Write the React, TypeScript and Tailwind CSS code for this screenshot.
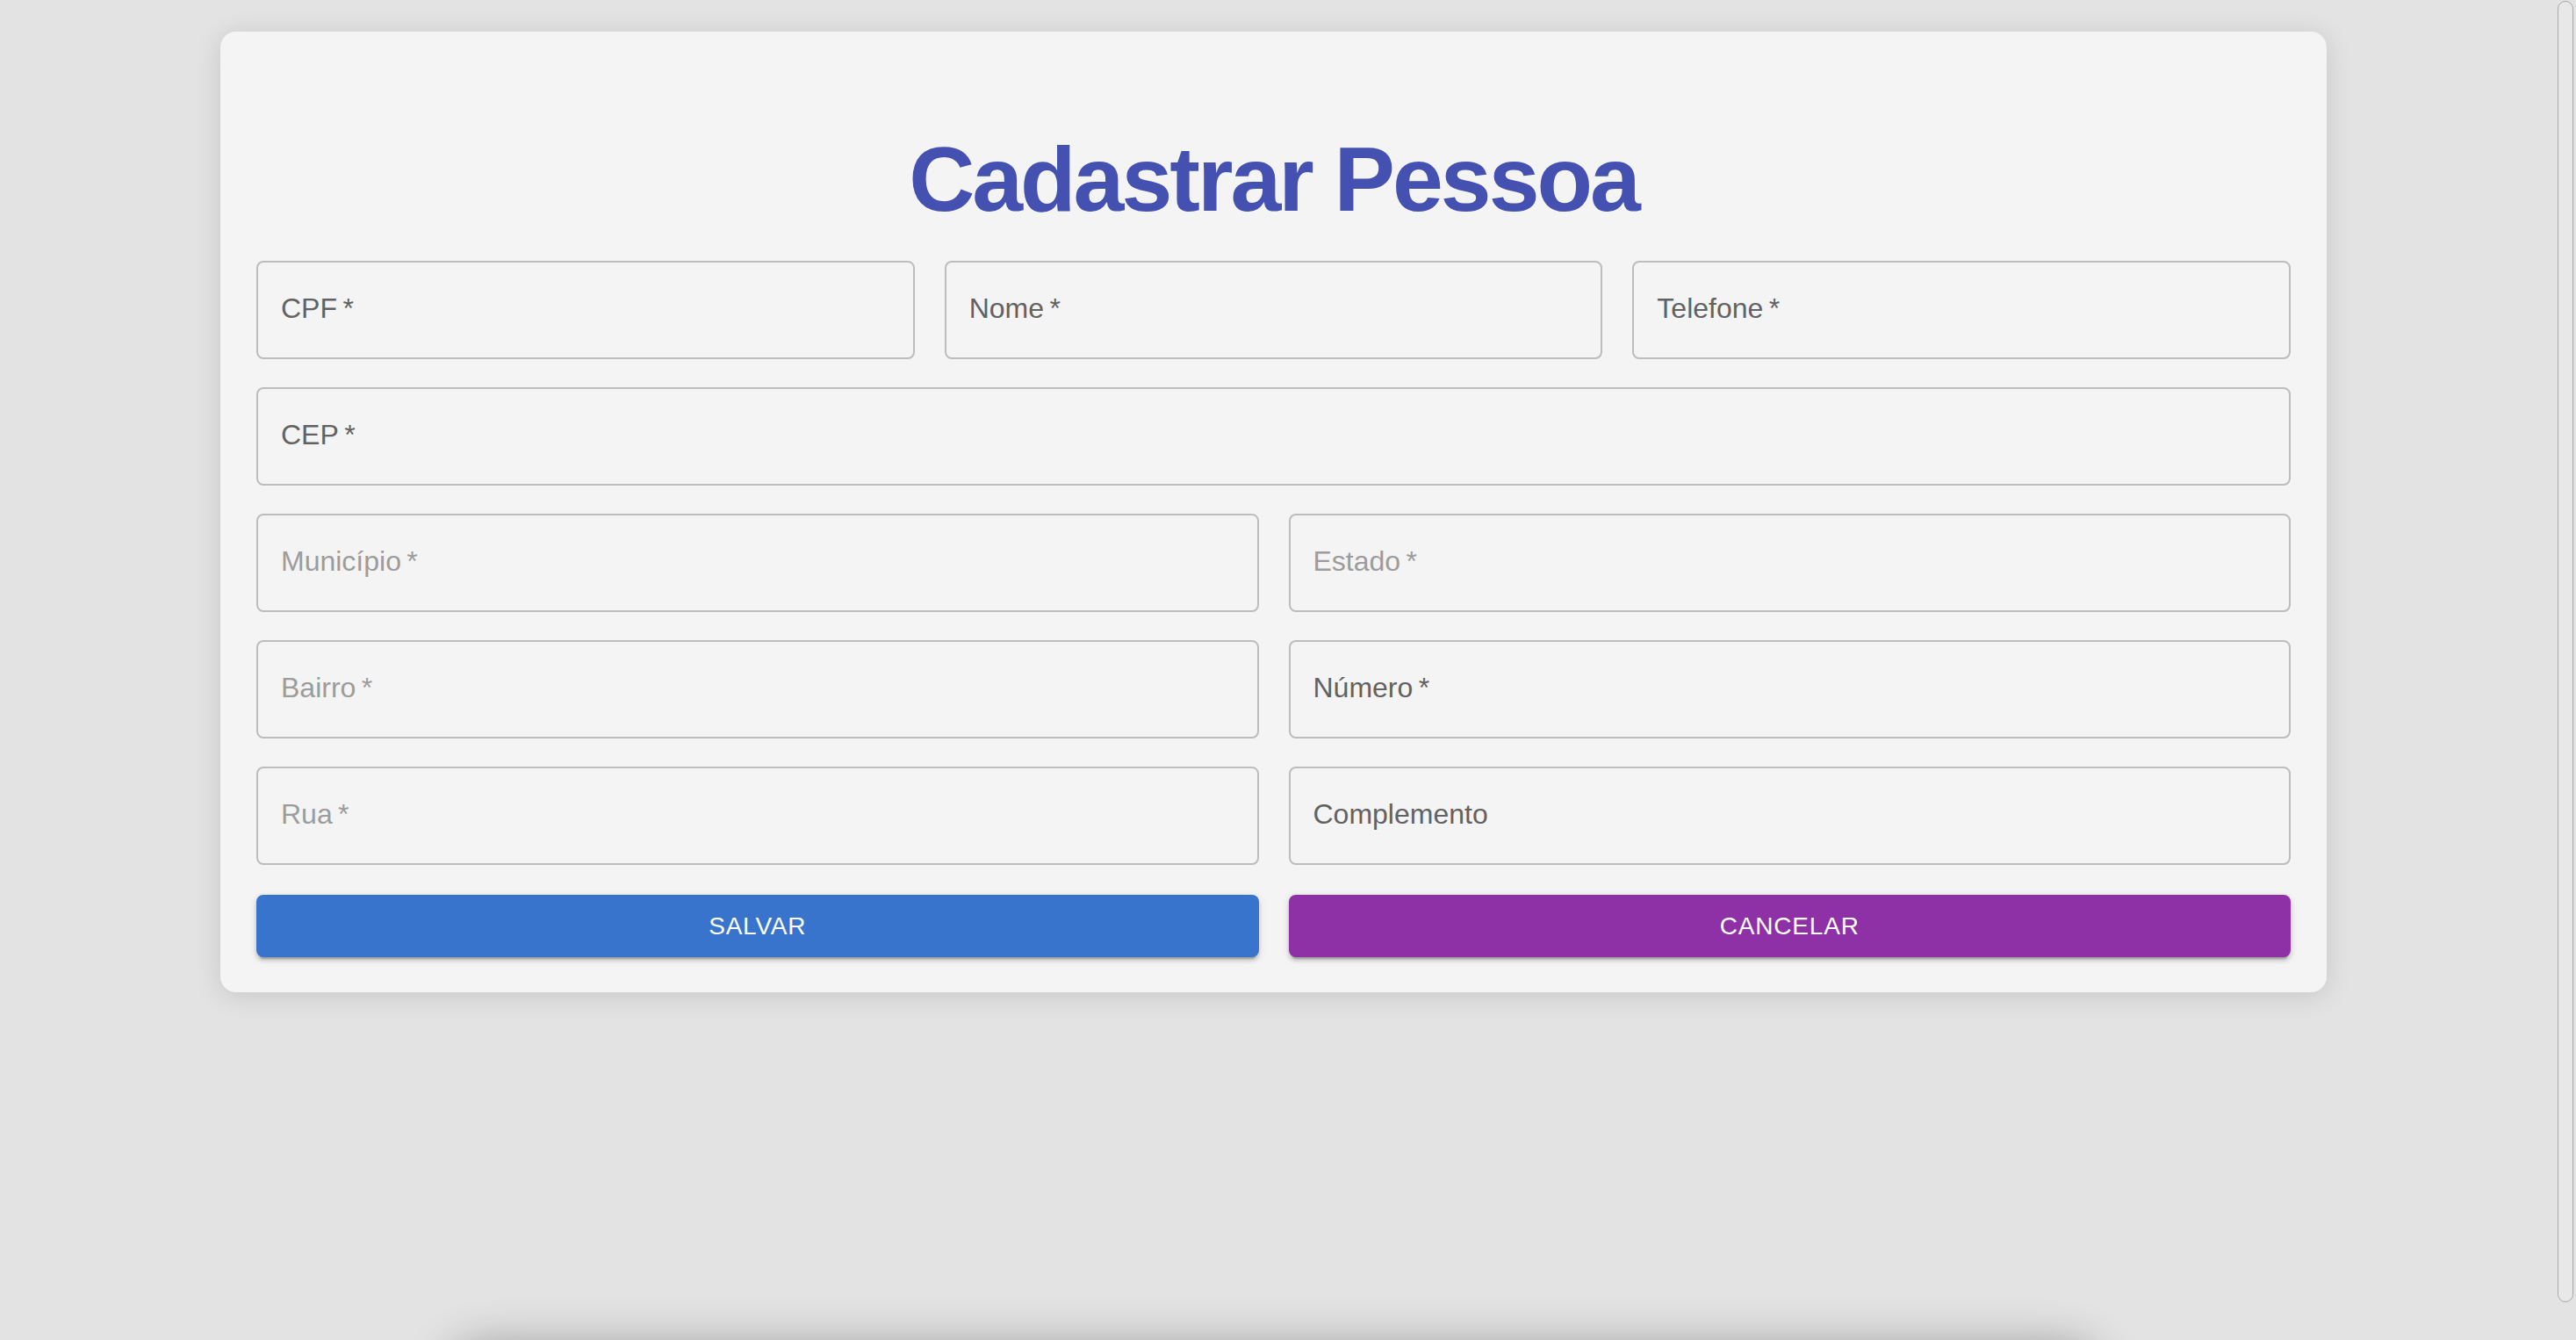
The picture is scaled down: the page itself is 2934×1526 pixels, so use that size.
const fields: { label: string; required?: boolean; disabled?: boolean }[][] = [
  [
    { label: "CPF", required: true },
    { label: "Nome", required: true },
    { label: "Telefone", required: true },
  ],
  [{ label: "CEP", required: true }],
  [
    { label: "Município", required: true, disabled: true },
    { label: "Estado", required: true, disabled: true },
  ],
  [
    { label: "Bairro", required: true, disabled: true },
    { label: "Número", required: true },
  ],
  [
    { label: "Rua", required: true, disabled: true },
    { label: "Complemento" },
  ],
]

function Field({ label, required, disabled }: { label: string; required?: boolean; disabled?: boolean }) {
  return (
    <div className="flex-1 h-[112px] rounded-lg border-2 border-[#bdbdbd] flex items-center pl-[26px] pb-[5px]">
      <span
        className={
          "text-[32px] leading-none " + (disabled ? "text-[#9c9c9c]" : "text-[#626262]")
        }
      >
        {label}
        {required ? "\u2009*" : ""}
      </span>
    </div>
  )
}

export default function App() {
  return (
    <div
      className="relative w-full h-[1526px] overflow-hidden bg-[#e3e3e3]"
      style={{ fontFamily: '"Liberation Sans", Arial, sans-serif' }}
    >
      <div className="w-[2901px] flex flex-col items-center pt-[36px]">
        <div className="w-[2399px] bg-[#f4f4f4] rounded-[18px] shadow-[0_4px_30px_rgba(0,0,0,0.13)] pt-[116px] px-[41px] pb-[40px]">
          <h1 className="text-center text-[104px] leading-[104px] font-bold tracking-[-3px] text-[#4451b0]">
            Cadastrar Pessoa
          </h1>

          <div className="mt-[41px] flex flex-col gap-[32px]">
            {fields.map((row, i) => (
              <div key={i} className="flex gap-[34px]">
                {row.map((f) => (
                  <Field key={f.label} {...f} />
                ))}
              </div>
            ))}

            <div className="mt-[2px] flex gap-[34px]">
              <button className="flex-1 h-[71px] rounded-lg bg-[#3874cc] text-white text-[28px] tracking-[0.8px] uppercase shadow-[0_6px_2px_-4px_rgba(0,0,0,0.2),0_4px_4px_0_rgba(0,0,0,0.14),0_2px_10px_0_rgba(0,0,0,0.12)]">
                Salvar
              </button>
              <button className="flex-1 h-[71px] rounded-lg bg-[#8e30a6] text-white text-[28px] tracking-[0.8px] uppercase shadow-[0_6px_2px_-4px_rgba(0,0,0,0.2),0_4px_4px_0_rgba(0,0,0,0.14),0_2px_10px_0_rgba(0,0,0,0.12)]">
                Cancelar
              </button>
            </div>
          </div>
        </div>

        <div className="mt-[412px] w-[1870px] h-[200px] rounded-[40px] bg-[#e3e3e3] shadow-[0_0_50px_12px_rgba(0,0,0,0.3)]" />
      </div>

      <div className="absolute right-[3px] top-[1px] w-[18px] h-[1482px] rounded-full border border-[#a9a9a9] bg-[#e8e8e8]" />
    </div>
  )
}
